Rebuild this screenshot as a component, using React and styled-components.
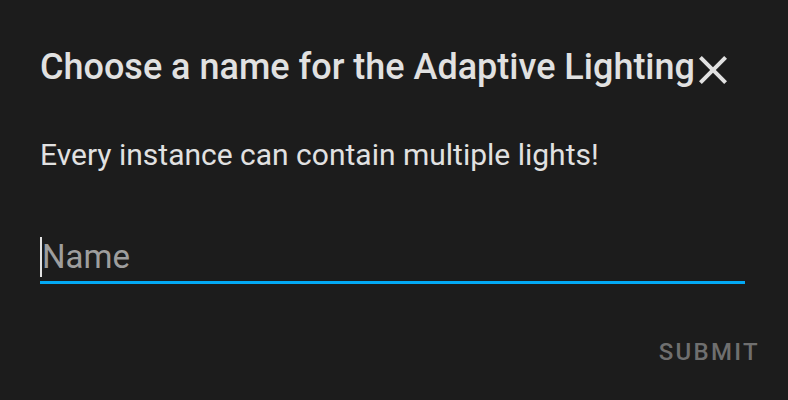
import React from 'react';
import styled, { createGlobalStyle } from 'styled-components';

const Global = createGlobalStyle`
  html, body {
    margin: 0;
    background: #1c1c1c;
    font-family: Roboto, "Noto Sans", sans-serif;
  }
`;

const Dialog = styled.div`
  width: 788px;
  height: 400px;
  box-sizing: border-box;
  background: #1c1c1c;
  color: #e1e1e1;
  display: flex;
  flex-direction: column;
  padding: 43px 28px 0 40px;
  overflow: hidden;
`;

const Header = styled.div`
  display: flex;
  align-items: flex-start;
`;

const Title = styled.h2`
  margin: 0;
  font-size: 36px;
  font-weight: 500;
  line-height: 48px;
  color: #e1e1e1;
  white-space: nowrap;
`;

const CloseButton = styled.button`
  border: 0;
  background: none;
  padding: 0;
  margin: 3px 0 0 -6px;
  color: #e1e1e1;
  display: flex;
  cursor: pointer;
`;

const Text = styled.p`
  margin: 41px 0 0;
  font-size: 30px;
  line-height: 40px;
  color: #e1e1e1;
`;

const Field = styled.label`
  margin: 62px 15px 0 0;
  display: flex;
  align-items: flex-start;
  border-bottom: 3px solid #03a9f4;
  padding-bottom: 4px;
`;

const Caret = styled.span`
  width: 2px;
  height: 40px;
  background: #e1e1e1;
  flex: none;
`;

const Input = styled.input`
  flex: 1;
  border: 0;
  outline: none;
  background: transparent;
  font-family: inherit;
  font-size: 33px;
  line-height: 40px;
  height: 40px;
  padding: 0;
  color: #e1e1e1;
  caret-color: transparent;
  &::placeholder {
    color: #9e9e9e;
  }
`;

const Actions = styled.div`
  margin-top: 54px;
  display: flex;
  justify-content: flex-end;
`;

const Button = styled.button`
  border: 0;
  background: none;
  padding: 0;
  font-family: inherit;
  font-size: 24px;
  line-height: 28px;
  font-weight: 500;
  letter-spacing: 2.3px;
  text-transform: uppercase;
  color: #6f6f6f;
`;

export default function App() {
  return (
    <>
      <Global />
      <Dialog>
        <Header>
          <Title>Choose a name for the Adaptive Lighting</Title>
          <CloseButton aria-label="Close">
            <svg width="48" height="48" viewBox="0 0 24 24" fill="currentColor">
              <path d="M19,6.41L17.59,5L12,10.59L6.41,5L5,6.41L10.59,12L5,17.59L6.41,19L12,13.41L17.59,19L19,17.59L13.41,12L19,6.41Z" />
            </svg>
          </CloseButton>
        </Header>
        <Text>Every instance can contain multiple lights!</Text>
        <Field>
          <Caret />
          <Input placeholder="Name" />
        </Field>
        <Actions>
          <Button>Submit</Button>
        </Actions>
      </Dialog>
    </>
  );
}
